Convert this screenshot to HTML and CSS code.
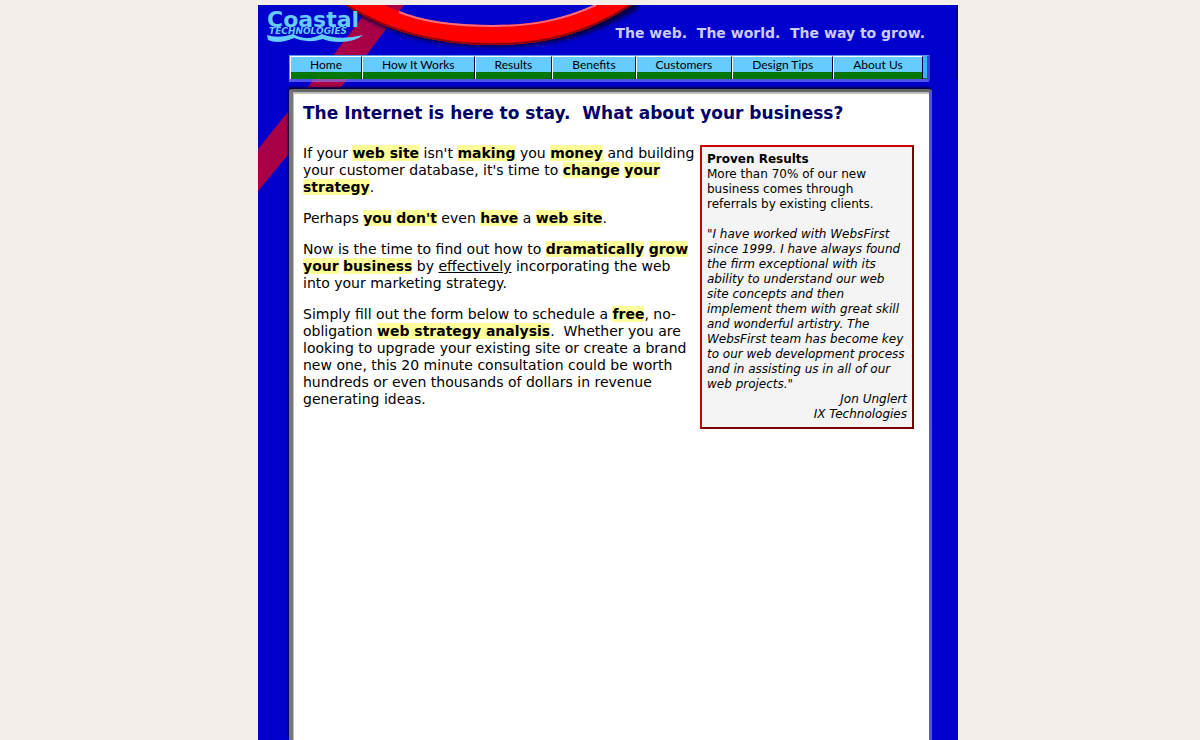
FILE: index.html
```html
<!DOCTYPE html>
<html lang="en">
<head>
    <meta charset="UTF-8">
    <meta name="viewport" content="width=device-width, initial-scale=1.0">
    <title>Coastal Technologies</title>
    <link rel="stylesheet" href="styles.css">
</head>
<body>
    <div class="page">
        <svg class="backdrop" width="700" height="200" viewBox="0 0 700 200" aria-hidden="true">
            <defs>
                <filter id="soft" x="-10%" y="-20%" width="120%" height="150%">
                    <feGaussianBlur stdDeviation="2"/>
                </filter>
            </defs>
            <path d="M113 0 H146 L110 48 L29 151 L0 186 V144 L29 108 L77 48 Z" fill="#a80046"/>
            <path d="M92 -1 C134 26 180 37 237 37 S334 26 378 -1" fill="none" stroke="#000040" stroke-width="10" filter="url(#soft)"/>
            <path d="M87 0 C130 28 180 40 235 40 S330 28 374 0 H337 C305 14 275 20 235 20 S160 17 127 0 Z" fill="#ff0000"/>
            <path d="M87 -1 C130 27 180 39 235 39 S330 27 374 -1" fill="none" stroke="#8c0010" stroke-width="2"/>
            <path d="M141 7 C165 17 200 21 235 21 C275 21 305 15 338 0" fill="none" stroke="#ff6a7c" stroke-width="2"/>
            <path d="M699 0 V74" stroke="#000055" stroke-width="1"/>
        </svg>
        <header class="header">
            <a class="logo" href="#" aria-label="Coastal Technologies">
                <svg width="98" height="40" viewBox="0 0 98 40">
                    <text class="logo-name" x="0" y="22">Coastal</text>
                    <text class="logo-sub" x="2" y="29">TECHNOLOGIES</text>
                    <path d="M0 30 Q12 34 26 29 Q40 37 55 29 Q72 36 96 30 Q88 37 73 37 Q62 37 56 34 Q40 39 27 33 Q11 40 1 35 Z"/>
                </svg>
            </a>
            <p class="tagline">The web.&nbsp; The world.&nbsp; The way to grow.</p>
        </header>
        <nav class="nav">
            <a href="#">Home</a>
            <a href="#">How It Works</a>
            <a href="#">Results</a>
            <a href="#">Benefits</a>
            <a href="#">Customers</a>
            <a href="#">Design Tips</a>
            <a href="#">About Us</a>
        </nav>
        <main class="panel">
            <h1>The Internet is here to stay.&nbsp; What about your business?</h1>
            <div class="columns">
                <div class="copy">
                    <p>If your <mark>web site</mark> isn't <mark>making</mark> you <mark>money</mark> and building your customer database, it's time to <mark>change</mark> <mark>your strategy</mark>.</p>
                    <p>Perhaps <mark>you</mark> <mark>don't</mark> even <mark>have</mark> a <mark>web site</mark>.</p>
                    <p>Now is the time to find out how to <mark>dramatically</mark> <mark>grow your</mark> <mark>business</mark> by <u>effectively</u> incorporating the web into your marketing strategy.</p>
                    <p>Simply fill out the form below to schedule a <mark>free</mark>, no-obligation <mark>web strategy analysis</mark>.&nbsp; Whether you are looking to upgrade your existing site or create a brand new one, this 20 minute consultation could be worth hundreds or even thousands of dollars in revenue generating ideas.</p>
                </div>
                <aside class="results">
                    <h2>Proven Results</h2>
                    <p>More than 70% of our new business comes through referrals by existing clients.</p>
                    <blockquote>"I have worked with WebsFirst since 1999. I have always found the firm exceptional with its ability to understand our web site concepts and then implement them with great skill and wonderful artistry. The WebsFirst team has become key to our web development process and in assisting us in all of our web projects."</blockquote>
                    <p class="author">Jon Unglert<br>IX Technologies</p>
                </aside>
            </div>
        </main>
    </div>
</body>
</html>
```

FILE: styles.css
```css
* {
    box-sizing: border-box;
}
body {
    margin: 0;
    padding: 5px 0 0 16px;
    background-color: #f3eeea;
    color: #000;
    font-family: Verdana, "DejaVu Sans", sans-serif;
}
.page {
    position: relative;
    display: flex;
    flex-direction: column;
    max-width: 700px;
    min-height: calc(100vh - 5px);
    margin: 0 auto;
    background-color: #0000cc;
}
.backdrop {
    position: absolute;
    top: 0;
    left: 0;
}
.header,
.nav,
.panel {
    position: relative;
}
.header {
    display: flex;
    justify-content: space-between;
    height: 50px;
    padding: 0 33px 0 9px;
}
.logo svg {
    display: block;
    fill: #66ccff;
}
.logo-name {
    font: bold 22px "DejaVu Sans", Verdana, sans-serif;
}
.logo-sub {
    font: italic bold 9px "DejaVu Sans", Verdana, sans-serif;
}
.tagline {
    margin: 20px 0 0;
    color: #ccccff;
    font-size: 14px;
    font-weight: bold;
    line-height: 16px;
}
.nav {
    display: flex;
    height: 27px;
    margin: 0 28px 0 31px;
    padding-right: 9px;
    border-top: 1px solid #4f9ae8;
    border-left: 1px solid #4f9ae8;
    border-right: 3px solid #6666ee99;
    border-bottom: 3px solid #8888ff99;
    border-radius: 0 0 3px 0;
    background: linear-gradient(#33b5ff 22px, #007700 22px) padding-box;
}
.nav a {
    flex: 1 0 auto;
    padding: 0 19px;
    border-top: 1px solid #fff;
    border-left: 1px solid #fff;
    border-right: 1px solid #000044;
    background: linear-gradient(#66ccff 15px, #007700 15px);
    color: #000;
    font-family: "Trebuchet MS", Lato, sans-serif;
    font-size: 12px;
    line-height: 16px;
    text-align: center;
    text-decoration: none;
    white-space: nowrap;
}
.panel {
    flex: 1;
    margin: 7px 26px 0 31px;
    padding: 10px 15px 20px 10px;
    border-top: 3px solid #666;
    border-left: 4px solid #777;
    border-right: 3px solid #5555dd;
    border-radius: 3px 3px 0 0;
    background-color: #fff;
    box-shadow: -1px -2px 2px #000044, inset 1px 2px 1px #bbb;
}
h1 {
    margin: 0 0 21px;
    color: #000066;
    font-size: 17px;
    line-height: 22px;
}
.columns {
    display: flex;
    align-items: flex-start;
    gap: 2px;
}
.copy {
    flex: 1;
    font-size: 14px;
    line-height: 17px;
}
.copy p {
    margin: 0 0 14px;
}
mark {
    background-color: #ffff99;
    color: #000;
    font-weight: bold;
}
.results {
    flex: 0 0 214px;
    padding: 5px;
    border: 2px outset #cc0000;
    background-color: #f4f4f4;
    font-size: 12px;
    line-height: 15px;
}
.results h2,
.results p {
    margin: 0;
    font-size: 12px;
}
.results blockquote {
    margin: 15px 0 0;
    font-style: italic;
}
.results .author {
    font-style: italic;
    text-align: right;
}
```
